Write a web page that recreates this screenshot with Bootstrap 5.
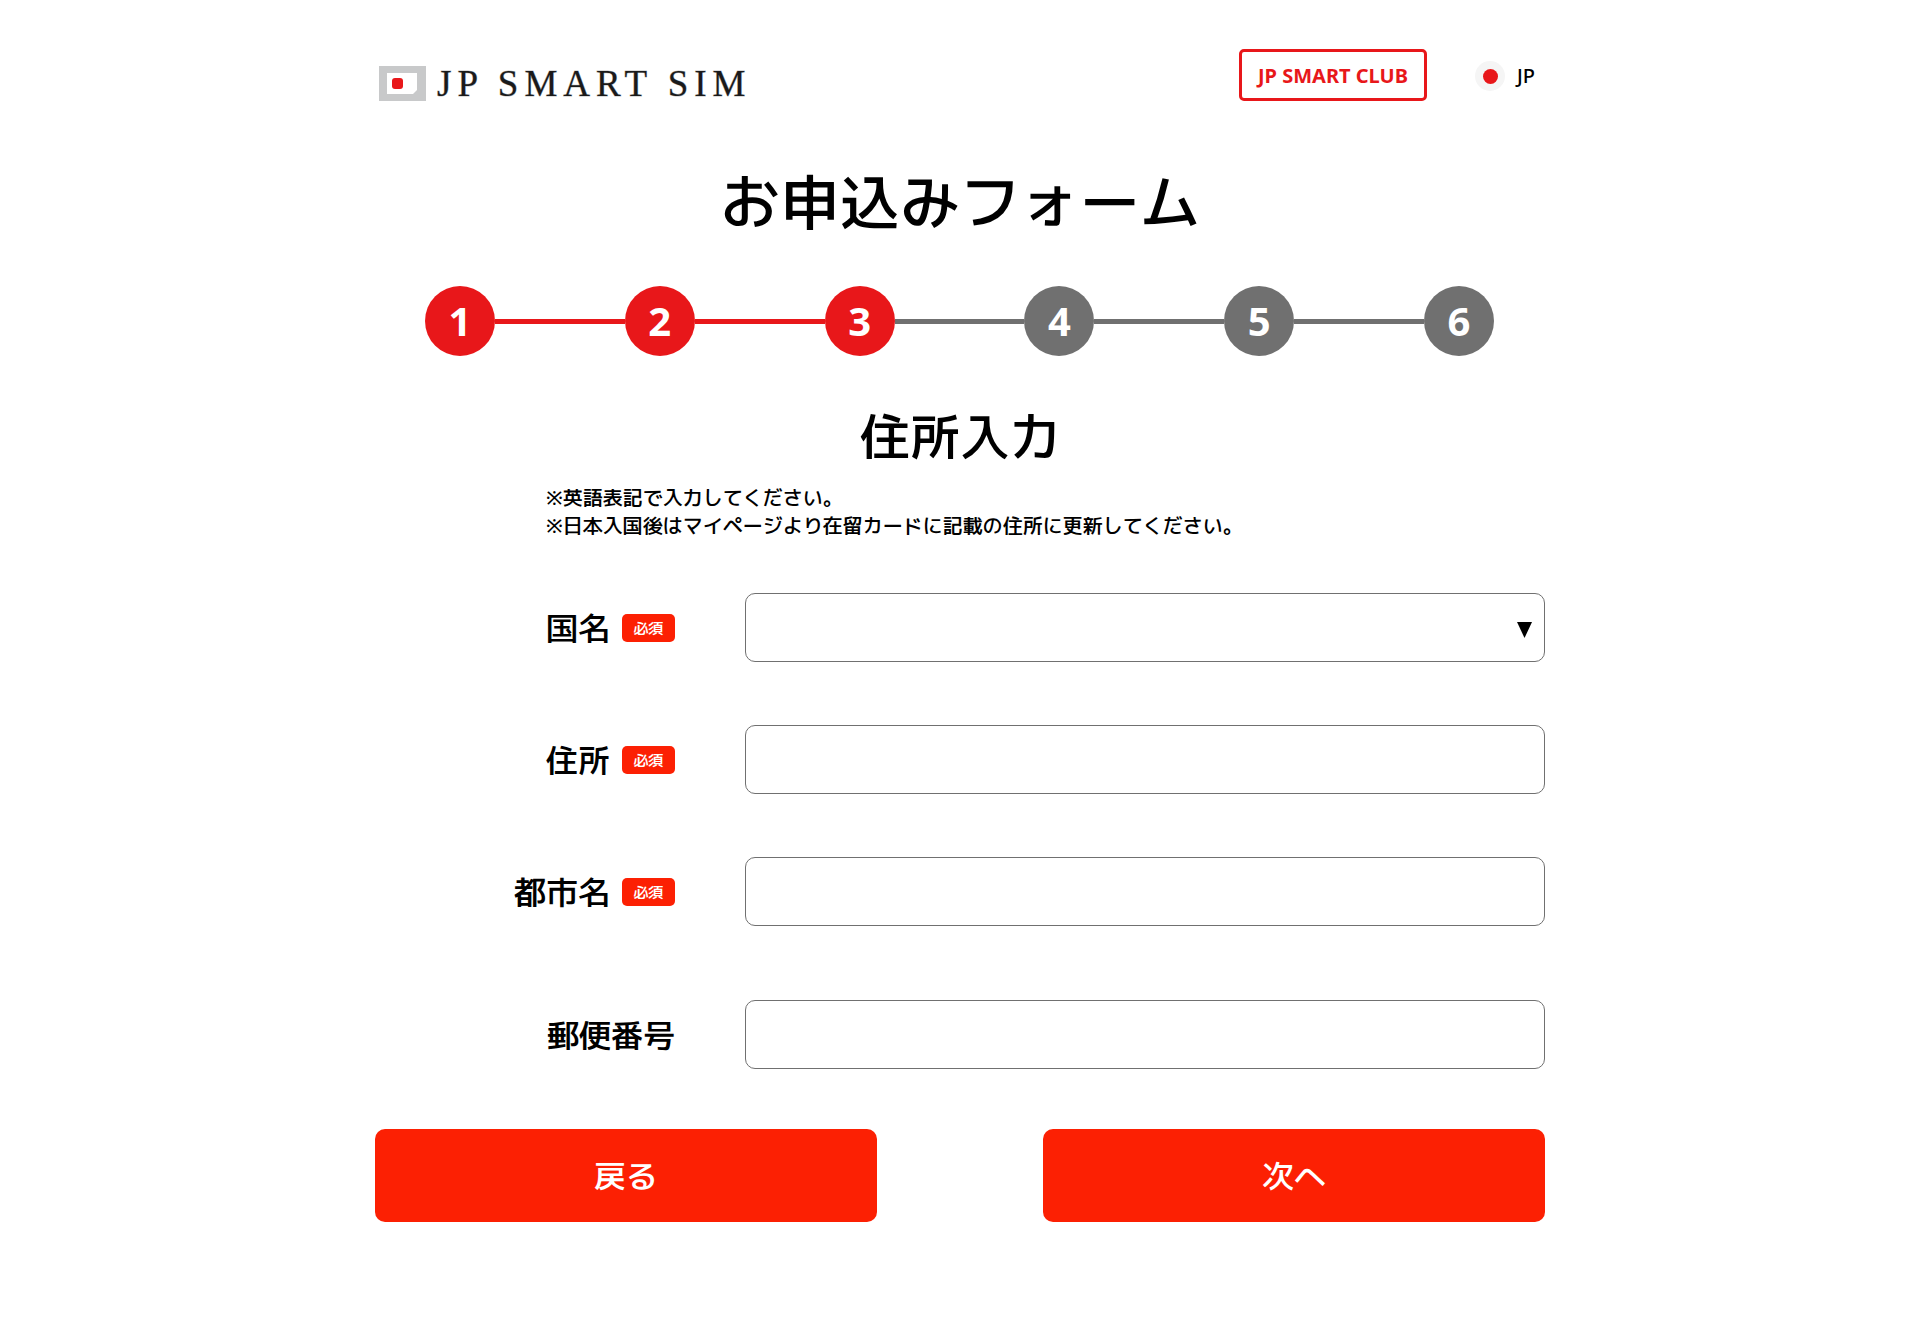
<!DOCTYPE html>
<html lang="ja">
<head>
<meta charset="utf-8">
<meta name="viewport" content="width=device-width, initial-scale=1">
<title>お申込みフォーム | JP SMART SIM</title>
<link href="https://cdn.jsdelivr.net/npm/bootstrap@5.3.0/dist/css/bootstrap.min.css" rel="stylesheet">
<style>
  :root { --brand: #e8171a; --action: #fc2003; --idle: #707070; }
  body { font-family: "Noto Sans", "M PLUS 1p", "Noto Sans CJK JP", sans-serif; font-size: 20px; line-height: 28px; font-weight: 500; color: #000; background: #fff; }
  .page { max-width: 1170px; }
  .site-header { padding: 49px 10px 0 4px; }
  .brand-logo { margin-top: 17px; gap: 11px; color: #1a1a1a; text-decoration: none; }
  .brand-name { font-family: "Liberation Serif", serif; font-size: 37px; line-height: 35px; font-weight: 400; letter-spacing: 6px; white-space: nowrap; -webkit-text-stroke: 1px #1a1a1a55; }
  .club-btn { height: 52px; padding: 0 16px; border: 3px solid var(--brand); border-radius: 5px; color: var(--brand); font-size: 20px; line-height: 48px; font-weight: 700; }
  .club-btn:hover { background: var(--brand); color: #fff; }
  .lang-link { gap: 12px; padding-top: 2px; color: #000; text-decoration: none; }
  .page-title { margin: 58px 0 0; font-size: 60px; line-height: 84px; font-weight: 500; }
  .steps { margin: 43px 51px 0 50px; }
  .step-dot { width: 70px; height: 70px; border-radius: 50%; background: var(--idle); color: #fff; font-size: 40px; line-height: 70px; font-weight: 700; text-align: center; }
  .step-line { height: 5px; background: var(--idle); }
  .step-dot.done, .step-line.done { background: var(--brand); }
  .section-title { margin: 45px 0 0; font-size: 50px; line-height: 70px; font-weight: 500; }
  .notes { margin: 13px 0 0 171px; }
  .fields { padding-top: 53px; }
  .field-row { margin-bottom: 63px; }
  .field-row.last { margin: 74px 0 60px; }
  .label-side { width: 370px; padding-right: 70px; gap: 12px; }
  .field-name { font-size: 32px; line-height: 44px; white-space: nowrap; }
  .need { width: 53px; height: 28px; border-radius: 5px; background: var(--action); color: #fff; font-size: 15px; line-height: 28px; text-align: center; }
  .field-box { height: 69px; border: 1px solid var(--idle); border-radius: 10px; font-size: 20px; }
  select.field-box { background-image: url("data:image/svg+xml,%3Csvg xmlns='http://www.w3.org/2000/svg' viewBox='0 0 15 16'%3E%3Cpath d='M0 0h15L7.500 16z'/%3E%3C/svg%3E"); background-size: 15px 16px; background-position: right 12px top 28px; }
  .nav-btn { width: 502px; height: 93px; border: 0; border-radius: 10px; background: var(--action); color: #fff; font-size: 32px; font-weight: 500; }
  .nav-btn:hover { background: #d91a00; color: #fff; }
</style>
</head>
<body>
<div class="page container-fluid p-0">
  <header class="site-header d-flex justify-content-between align-items-start">
    <a href="#" class="brand-logo d-flex align-items-center" aria-label="JP SMART SIM">
      <svg width="47" height="35" viewBox="0 0 47 35" aria-hidden="true"><path fill="#c8c9ca" d="M0 0h47v35H0z"/><path fill="#fff" d="M8 7h30v17l-4 4H8z"/><rect x="13" y="12" width="11" height="11" rx="3" fill="#e8171a"/></svg>
      <span class="brand-name">JP SMART SIM</span>
    </a>
    <div class="d-flex align-items-center gap-5">
      <button type="button" class="club-btn btn">JP SMART CLUB</button>
      <a href="#" class="lang-link d-flex align-items-center">
        <svg width="30" height="30" viewBox="0 0 30 30" aria-hidden="true"><circle cx="15" cy="15" r="15" fill="#f5f5f5"/><circle cx="15.500" cy="15.500" r="7.500" fill="#e8171a"/></svg>
        <span>JP</span>
      </a>
    </div>
  </header>

  <main>
    <h1 class="page-title text-center">お申込みフォーム</h1>

    <div class="steps d-flex align-items-center">
      <div class="step-dot done flex-shrink-0">1</div>
      <div class="step-line done flex-fill"></div>
      <div class="step-dot done flex-shrink-0">2</div>
      <div class="step-line done flex-fill"></div>
      <div class="step-dot done flex-shrink-0">3</div>
      <div class="step-line flex-fill"></div>
      <div class="step-dot flex-shrink-0">4</div>
      <div class="step-line flex-fill"></div>
      <div class="step-dot flex-shrink-0">5</div>
      <div class="step-line flex-fill"></div>
      <div class="step-dot flex-shrink-0">6</div>
    </div>

    <h2 class="section-title text-center">住所入力</h2>
    <p class="notes">※英語表記で入力してください。<br>※日本入国後はマイページより在留カードに記載の住所に更新してください。</p>

    <form class="fields">
      <div class="field-row d-flex align-items-center">
        <div class="label-side d-flex justify-content-end align-items-center flex-shrink-0">
          <label class="field-name" for="country">国名</label><span class="need">必須</span>
        </div>
        <select id="country" class="field-box form-select"><option value=""></option></select>
      </div>
      <div class="field-row d-flex align-items-center">
        <div class="label-side d-flex justify-content-end align-items-center flex-shrink-0">
          <label class="field-name" for="address">住所</label><span class="need">必須</span>
        </div>
        <input id="address" type="text" class="field-box form-control">
      </div>
      <div class="field-row d-flex align-items-center">
        <div class="label-side d-flex justify-content-end align-items-center flex-shrink-0">
          <label class="field-name" for="city">都市名</label><span class="need">必須</span>
        </div>
        <input id="city" type="text" class="field-box form-control">
      </div>
      <div class="field-row last d-flex align-items-center">
        <div class="label-side d-flex justify-content-end align-items-center flex-shrink-0">
          <label class="field-name" for="postal">郵便番号</label>
        </div>
        <input id="postal" type="text" class="field-box form-control">
      </div>
      <div class="d-flex justify-content-between gap-3 pb-5">
        <button type="button" class="nav-btn btn">戻る</button>
        <button type="submit" class="nav-btn btn">次へ</button>
      </div>
    </form>
  </main>
</div>
<script src="https://cdn.jsdelivr.net/npm/bootstrap@5.3.0/dist/js/bootstrap.bundle.min.js"></script>
</body>
</html>
